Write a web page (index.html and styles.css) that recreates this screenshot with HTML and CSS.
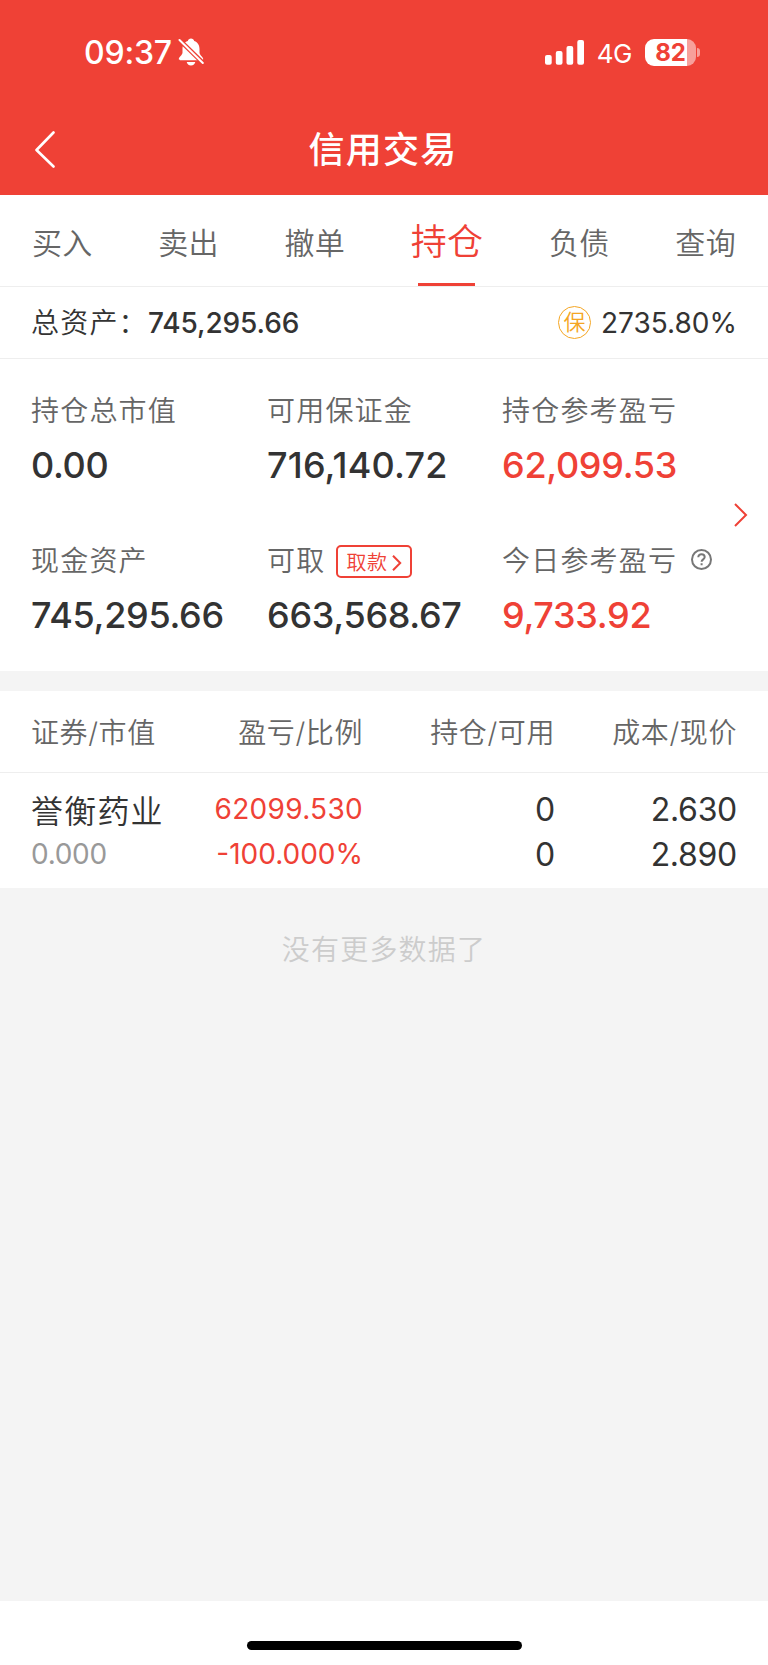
FILE: index.html
```html
<!DOCTYPE html>
<html lang="zh-CN">
<head>
    <meta charset="UTF-8">
    <meta name="viewport" content="width=device-width, initial-scale=1.0">
    <title>信用交易</title>
    <link rel="stylesheet" href="styles.css">
</head>
<body>
    <header class="header">
        <div class="status-bar">
            <span class="time">09:37</span>
            <svg class="bell" width="26" height="28" viewBox="0 0 26 28">
                <path fill="#fff" d="M13 .5c-1.600 0-2.900 1-3.200 2.400C6 4.300 4.500 7.300 4.500 11v3.500c0 2.500-3.700 4.500-3.700 6.500 0 .8.600 1.200 1.400 1.200h21.600c.8 0 1.400-.4 1.400-1.200 0-2-3.700-4-3.700-6.500V11c0-3.700-1.500-6.700-5.300-8.100C15.900 1.500 14.600.5 13 .5zM8.700 24h8.600c-.3 2-2 3.400-4.300 3.400S9 26 8.700 24z"/>
                <path stroke="#ef4136" stroke-width="4.500" d="M1 1.500l25 24.500"/>
                <path stroke="#fff" stroke-width="2" stroke-linecap="round" d="M1.500 2l23.300 23"/>
            </svg>
            <div class="status-right">
                <svg width="39" height="25" viewBox="0 0 39 25" fill="#fff">
                    <rect x="0" y="15" width="6.700" height="9.700" rx="2"/>
                    <rect x="10.800" y="11" width="6.700" height="13.700" rx="2"/>
                    <rect x="21.500" y="6" width="6.700" height="18.700" rx="2"/>
                    <rect x="32.300" y="0" width="6.700" height="24.700" rx="2"/>
                </svg>
                <span class="network">4G</span>
                <div class="battery"><span>82</span></div>
                <i class="battery-cap"></i>
            </div>
        </div>
        <div class="nav-bar">
            <svg class="back" width="22" height="38" viewBox="0 0 22 38">
                <path fill="none" stroke="#fff" stroke-width="2.600" stroke-linecap="round" stroke-linejoin="round" d="M18.500 1.500L1.500 19l17 16.500"/>
            </svg>
            <h1>信用交易</h1>
        </div>
    </header>

    <nav class="tabs">
        <a>买入</a>
        <a>卖出</a>
        <a>撤单</a>
        <a class="active">持仓</a>
        <a>负债</a>
        <a>查询</a>
    </nav>

    <div class="total">
        <span class="total-label">总资产<i>：</i></span>
        <span class="total-value">745,295.66</span>
        <span class="badge">保</span>
        <span class="ratio">2735.80%</span>
    </div>

    <section class="assets">
        <div class="asset">
            <div class="label">持仓总市值</div>
            <div class="value">0.00</div>
        </div>
        <div class="asset">
            <div class="label">可用保证金</div>
            <div class="value wide">716,140.72</div>
        </div>
        <div class="asset">
            <div class="label">持仓参考盈亏</div>
            <div class="value red">62,099.53</div>
        </div>
        <div class="asset">
            <div class="label">现金资产</div>
            <div class="value">745,295.66</div>
        </div>
        <div class="asset">
            <div class="label">可取
                <span class="withdraw">取款
                    <svg width="10" height="16" viewBox="0 0 10 16">
                        <path fill="none" stroke="#ef4136" stroke-width="2" d="M1 .8l7.200 7.200L1 15.200"/>
                    </svg>
                </span>
            </div>
            <div class="value">663,568.67</div>
        </div>
        <div class="asset">
            <div class="label">今日参考盈亏
                <svg class="help" width="21" height="21" viewBox="0 0 21 21" fill="none" stroke="#777" stroke-width="2">
                    <circle cx="10.500" cy="10.500" r="9.500"/>
                    <path d="M7.300 8.300c0-1.900 1.400-3 3.200-3s3.200 1.100 3.200 2.800c0 2.200-3.100 2.300-3.100 4.700M10.600 14.300v1.900"/>
                </svg>
            </div>
            <div class="value red">9,733.92</div>
        </div>
        <svg class="more" width="14" height="24" viewBox="0 0 14 24">
            <path fill="none" stroke="#ef4136" stroke-width="2" d="M1 1l11 11L1 23"/>
        </svg>
    </section>

    <section class="holdings">
        <div class="row head">
            <span>证券/市值</span>
            <span>盈亏/比例</span>
            <span>持仓/可用</span>
            <span>成本/现价</span>
        </div>
        <div class="row stock">
            <div>
                <p class="name">誉衡药业</p>
                <p class="small gray">0.000</p>
            </div>
            <div>
                <p class="small red">62099.530</p>
                <p class="small red percent">-100.000%</p>
            </div>
            <div>
                <p>0</p>
                <p>0</p>
            </div>
            <div>
                <p>2.630</p>
                <p>2.890</p>
            </div>
        </div>
    </section>

    <p class="no-more">没有更多数据了</p>

    <footer class="home"><i></i></footer>
</body>
</html>
```
FILE: styles.css
```css
* {
    box-sizing: border-box;
    margin: 0;
    padding: 0;
}
body {
    display: flex;
    flex-direction: column;
    height: 1665px;
    background: #f4f4f4;
    color: #333;
    font-family: Inter, "Noto Sans CJK SC", sans-serif;
    font-size: 28px;
}
svg {
    display: block;
}
.red {
    color: #ef4136;
}

/* 顶部 */
.header {
    height: 195px;
    background: #ef4136;
    color: #fff;
}
.status-bar {
    display: flex;
    align-items: center;
    height: 105px;
    padding: 0 68px 0 84px;
}
.time {
    font-size: 32px;
    font-weight: 550;
    width: 94px;
    letter-spacing: -0.2px;
    white-space: nowrap;
}
.bell {
    margin-top: -1px;
}
.status-right {
    display: flex;
    align-items: center;
    margin-left: auto;
}
.network {
    margin: 1px 13px 0 13px;
    font-size: 26px;
    letter-spacing: -0.5px;
}
.battery {
    width: 51px;
    height: 27px;
    margin-top: -1px;
    border-radius: 9px;
    background: linear-gradient(to right, #fff 42px, #f7a09b 42px);
    color: #ef4136;
    font-size: 24px;
    font-weight: 700;
    line-height: 27px;
    text-align: center;
}
.battery-cap {
    width: 3px;
    height: 9px;
    margin-left: 1px;
    border-radius: 0 4px 4px 0;
    background: #f7a09b;
}
.nav-bar {
    display: flex;
    align-items: center;
    height: 90px;
    padding: 0 35px;
}
.nav-bar h1 {
    flex: 1;
    margin-right: 24px;
    padding-bottom: 6px;
    font-size: 36px;
    font-weight: 500;
    letter-spacing: 1.2px;
    text-align: center;
}

/* 标签页 */
.tabs {
    display: flex;
    justify-content: space-between;
    height: 92px;
    padding: 0 32px 0 32px;
    border-bottom: 1px solid #eee;
    background: #fff;
    color: #666;
    font-size: 30px;
    font-weight: 350;
    letter-spacing: 0.3px;
    line-height: 97px;
}
.tabs .active {
    position: relative;
    color: #ef4136;
    font-size: 36px;
    line-height: 95px;
}
.tabs .active::after {
    content: "";
    position: absolute;
    left: 7px;
    bottom: 0;
    width: 57px;
    height: 3px;
    background: #ef4136;
}

/* 总资产 */
.total {
    display: flex;
    align-items: center;
    height: 72px;
    padding: 0 31px;
    border-bottom: 1px solid #eee;
    background: #fff;
}
.total-label {
    width: 117px;
    padding-bottom: 3px;
    font-weight: 350;
    letter-spacing: 1.2px;
    white-space: nowrap;
}
.total-label i {
    font-style: normal;
}
.total-value {
    font-weight: 500;
    letter-spacing: -0.1px;
}
.badge {
    width: 33px;
    height: 33px;
    margin-left: auto;
    border: 1px solid #f5a623;
    border-radius: 50%;
    color: #f5a623;
    font-size: 22px;
    font-weight: 350;
    line-height: 31px;
    text-align: center;
}
.ratio {
    margin-left: 10px;
}

/* 资产明细 */
.assets {
    position: relative;
    display: grid;
    grid-template-columns: 236px 235px 1fr;
    row-gap: 60px;
    height: 312px;
    padding: 33px 0 0 31px;
    background: #fff;
    align-content: start;
}
.label {
    display: flex;
    align-items: center;
    height: 34px;
    color: #666;
    font-weight: 350;
    letter-spacing: 1.2px;
}
.value {
    height: 40px;
    margin-top: 19px;
    margin-bottom: -3px;
    font-size: 36px;
    font-weight: 500;
    letter-spacing: -0.3px;
    line-height: 40px;
}
.value.wide {
    letter-spacing: 0.2px;
}
.withdraw {
    display: flex;
    align-items: center;
    width: 76px;
    height: 33px;
    margin: 4px 0 0 11px;
    padding-left: 8px;
    border: 2px solid #ef4136;
    border-radius: 5px;
    color: #ef4136;
    font-size: 20px;
    letter-spacing: 0.5px;
}
.withdraw svg {
    margin: 3px 0 0 5px;
}
.help {
    margin-left: 14px;
}
.more {
    position: absolute;
    top: 144px;
    right: 20px;
}

/* 持仓列表 */
.holdings {
    margin-top: 20px;
    background: #fff;
}
.row {
    display: grid;
    grid-template-columns: 151px 181px 192px 182px;
    padding: 0 31px;
    text-align: right;
}
.row > :first-child {
    text-align: left;
}
.head {
    height: 82px;
    border-bottom: 1px solid #eee;
    color: #666;
    font-weight: 350;
    letter-spacing: 0.6px;
    line-height: 85px;
}
.stock {
    height: 115px;
    padding-top: 14px;
    font-size: 32px;
    letter-spacing: -0.3px;
    line-height: 45px;
}
.stock .name {
    padding-top: 2px;
    margin-bottom: -2px;
    font-weight: 350;
    letter-spacing: 1.2px;
}
.stock .small {
    font-size: 28px;
    letter-spacing: 0.3px;
}
.stock .percent {
    letter-spacing: 0;
}
.stock .gray {
    color: #999;
    letter-spacing: -0.3px;
}
.no-more {
    margin-top: 42px;
    color: #ccc;
    font-weight: 350;
    letter-spacing: 1.2px;
    line-height: 40px;
    text-align: center;
}

/* 底部横条 */
.home {
    height: 64px;
    margin-top: auto;
    padding-top: 40px;
    background: #fff;
}
.home i {
    display: block;
    width: 275px;
    height: 9px;
    margin: 0 auto;
    border-radius: 5px;
    background: #000;
}
```
